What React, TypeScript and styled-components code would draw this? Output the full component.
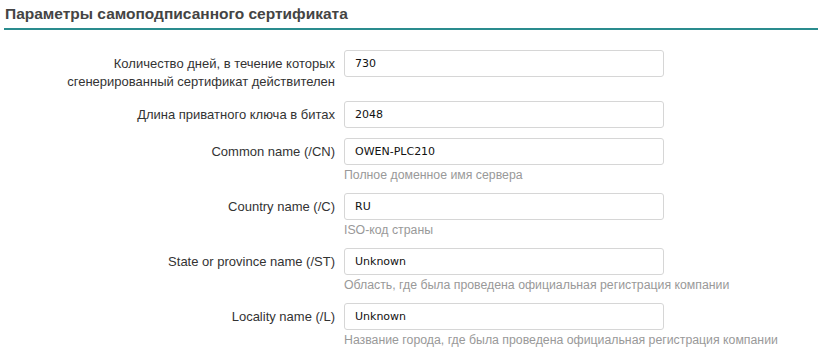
import { FunctionComponent } from "react";
import styled, { createGlobalStyle } from "styled-components";

type Field = {
  label: string[];
  value: string;
  help?: string;
};

const fields: Field[] = [
  {
    label: ["Количество дней, в течение которых", "сгенерированный сертификат действителен"],
    value: "730",
  },
  { label: ["Длина приватного ключа в битах"], value: "2048" },
  { label: ["Common name (/CN)"], value: "OWEN-PLC210", help: "Полное доменное имя сервера" },
  { label: ["Country name (/C)"], value: "RU", help: "ISO-код страны" },
  {
    label: ["State or province name (/ST)"],
    value: "Unknown",
    help: "Область, где была проведена официальная регистрация компании",
  },
  {
    label: ["Locality name (/L)"],
    value: "Unknown",
    help: "Название города, где была проведена официальная регистрация компании",
  },
];

const App: FunctionComponent = () => {
  return (
    <>
      <GlobalStyle />
      <Page>
        <Title>Параметры самоподписанного сертификата</Title>
        <Form>
          {fields.map((field, index) => {
            return (
              <FormGroup key={index}>
                <Label>
                  {field.label.map((line, i) => (
                    <span key={i}>{line}</span>
                  ))}
                </Label>
                <Control>
                  <Input defaultValue={field.value} />
                  {field.help && <Help>{field.help}</Help>}
                </Control>
              </FormGroup>
            );
          })}
        </Form>
      </Page>
    </>
  );
};

export default App;

const GlobalStyle = createGlobalStyle`
  body {
    margin: 0;
    background: #fff;
    font-family: "Liberation Sans", Arial, sans-serif;
  }
`;

const Page = styled.div`
  width: 823px;
  height: 354px;
  padding: 5px 5px 0 4px;
  box-sizing: border-box;
  overflow: hidden;
`;

const Title = styled.h3`
  margin: 0;
  padding: 0 0 5px 1px;
  font-size: 15.5px;
  line-height: 18px;
  font-weight: bold;
  color: #444;
  border-bottom: 2px solid #2a8c8e;
`;

const Form = styled.div`
  display: flex;
  flex-direction: column;
  gap: 10px;
  padding-top: 20px;
`;

const FormGroup = styled.div`
  display: grid;
  grid-template-columns: 331px 320px;
  column-gap: 9px;
  align-items: start;
`;

const Label = styled.label`
  display: flex;
  flex-direction: column;
  align-items: flex-end;
  padding-top: 5px;
  font-size: 13px;
  line-height: 18px;
  color: #333;
  text-align: right;
  white-space: nowrap;
`;

const Control = styled.div`
  display: flex;
  flex-direction: column;
`;

const Input = styled.input`
  box-sizing: border-box;
  width: 320px;
  height: 27px;
  padding: 0 10px;
  border: 1px solid #d6d6d6;
  border-radius: 3px;
  font-family: "DejaVu Sans", Tahoma, sans-serif;
  font-size: 11px;
  color: #111;
  background: #fff;
  outline: none;
`;

const Help = styled.div`
  padding-top: 3px;
  height: 15px;
  font-size: 12.3px;
  line-height: 14px;
  color: #999;
  white-space: nowrap;
`;
